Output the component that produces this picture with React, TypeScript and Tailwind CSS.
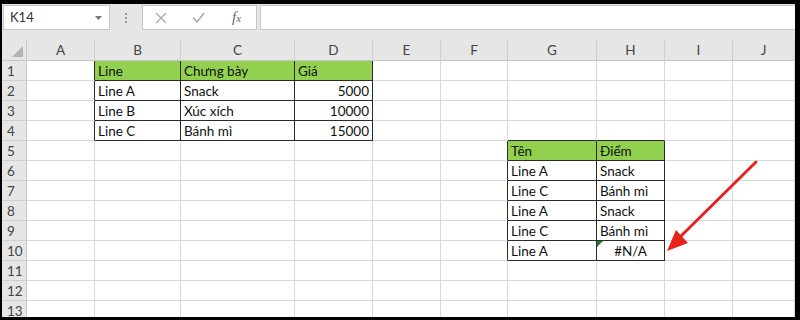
import React from "react";

type Cell = { text: string; align?: "left" | "right" | "center"; fill?: boolean; errorMark?: boolean };

const COLS = ["A", "B", "C", "D", "E", "F", "G", "H", "I", "J"];
const ROWS = [1, 2, 3, 4, 5, 6, 7, 8, 9, 10, 11, 12, 13];

// sheet content keyed by cell address
const CELLS: Record<string, Cell> = {
  B1: { text: "Line", fill: true },
  C1: { text: "Chưng bày", fill: true },
  D1: { text: "Giá", fill: true },
  B2: { text: "Line A" },
  C2: { text: "Snack" },
  D2: { text: "5000", align: "right" },
  B3: { text: "Line B" },
  C3: { text: "Xúc xích" },
  D3: { text: "10000", align: "right" },
  B4: { text: "Line C" },
  C4: { text: "Bánh mì" },
  D4: { text: "15000", align: "right" },
  G5: { text: "Tên", fill: true },
  H5: { text: "Điểm", fill: true },
  G6: { text: "Line A" },
  H6: { text: "Snack" },
  G7: { text: "Line C" },
  H7: { text: "Bánh mì" },
  G8: { text: "Line A" },
  H8: { text: "Snack" },
  G9: { text: "Line C" },
  H9: { text: "Bánh mì" },
  G10: { text: "Line A" },
  H10: { text: "#N/A", align: "center", errorMark: true },
};

// bordered ranges: [firstCol, lastCol, firstRow, lastRow]
const TABLES: Array<[number, number, number, number]> = [
  [1, 3, 1, 4],
  [6, 7, 5, 10],
];

function inTable(c: number, r: number) {
  return TABLES.some(([c0, c1, r0, r1]) => c >= c0 && c <= c1 && r >= r0 && r <= r1);
}

const FONT = { fontFamily: "Lato, 'Noto Sans', sans-serif" };

function FormulaBar() {
  return (
    <div className="h-[36px] bg-[#e6e6e6] flex items-start pt-[1px] pl-[1px]">
      <div className="w-[107px] h-[25px] bg-white border border-[#c6c6c6] flex items-center justify-between pl-[6px] pr-[7px] text-[13px] text-[#333]">
        <span>K14</span>
        <svg width="7" height="4" viewBox="0 0 7 4">
          <path d="M0 0h7L3.5 4z" fill="#777" />
        </svg>
      </div>
      <div className="w-[32px] h-[25px] flex flex-col items-center justify-center gap-[2px]">
        <span className="w-[2px] h-[2px] bg-[#999]" />
        <span className="w-[2px] h-[2px] bg-[#999]" />
        <span className="w-[2px] h-[2px] bg-[#999]" />
      </div>
      <div className="w-[115px] h-[25px] bg-white border border-[#c6c6c6] flex items-center">
        <div className="w-[36px] flex justify-center">
          <svg width="12" height="12" viewBox="0 0 12 12">
            <path d="M1 1l10 10M11 1L1 11" stroke="#a6a6a6" strokeWidth="1.2" />
          </svg>
        </div>
        <div className="w-[38px] flex justify-center">
          <svg width="13" height="11" viewBox="0 0 13 11">
            <path d="M1 5.5l4 4.5L12 1" stroke="#a6a6a6" strokeWidth="1.4" fill="none" />
          </svg>
        </div>
        <div className="flex-1 flex justify-center">
          <span className="italic text-[15px] text-[#666]" style={{ fontFamily: "'Liberation Serif', serif" }}>
            f<span className="text-[11px]">x</span>
          </span>
        </div>
      </div>
      <div className="ml-[3px] flex-1 h-[25px] bg-white border border-[#c6c6c6] border-r-0" />
    </div>
  );
}

export default function App() {
  return (
    <div className="w-[800px] h-[320px] bg-black pt-[4px] pl-[2px] pr-[5px] pb-[3px]" style={FONT}>
      <div className="relative w-full h-full overflow-hidden bg-white">
        <FormulaBar />

        <div className="grid grid-cols-[25px_68px_86px_114px_78px_68px_67px_89px_68px_68px_62px] grid-rows-[21px] auto-rows-[20px] text-[13.5px] text-[#111]">
          {/* column headers */}
          <div className="bg-[#e6e6e6] border-r border-b border-[#c6c6c6] relative">
            <svg className="absolute right-[3px] bottom-[3px]" width="11" height="11" viewBox="0 0 11 11">
              <path d="M11 0v11H0z" fill="#b4b4b4" />
            </svg>
          </div>
          {COLS.map((c) => (
            <div
              key={c}
              className="bg-[#e6e6e6] border-r border-b border-r-[#d0d0d0] border-b-[#c6c6c6] flex items-center justify-center text-[#444] pt-[1px]"
            >
              {c}
            </div>
          ))}

          {ROWS.map((r) => (
            <React.Fragment key={r}>
              <div className="bg-[#e6e6e6] border-r border-b border-r-[#c6c6c6] border-b-[#d0d0d0] flex items-center pl-[5px] pt-[1px] text-[#444]">
                {r}
              </div>
              {COLS.map((c, ci) => {
                const cell = CELLS[`${c}${r}`];
                const black = inTable(ci, r);
                const rightBlack = black || inTable(ci + 1, r);
                const bottomBlack = black || inTable(ci, r + 1);
                return (
                  <div
                    key={c}
                    className={`relative border-r border-b flex items-center px-[3px] pt-[1px] whitespace-nowrap overflow-hidden ${
                      rightBlack ? "border-r-[#2a2a2a]" : "border-r-[#d9d9d9]"
                    } ${bottomBlack ? "border-b-[#2a2a2a]" : "border-b-[#d9d9d9]"} ${cell?.fill ? "bg-[#92d050]" : ""} ${
                      cell?.align === "right" ? "justify-end" : cell?.align === "center" ? "justify-center" : "justify-start"
                    }`}
                  >
                    {cell?.errorMark && (
                      <svg className="absolute left-0 top-0" width="6" height="6" viewBox="0 0 6 6">
                        <path d="M0 0h6L0 6z" fill="#1e7b34" />
                      </svg>
                    )}
                    {cell?.text}
                  </div>
                );
              })}
            </React.Fragment>
          ))}
        </div>

        {/* red annotation arrow */}
        <svg className="absolute left-0 top-0 pointer-events-none" width="793" height="313" viewBox="2 4 793 313">
          <line x1="756" y1="162" x2="680" y2="237" stroke="#e8231c" strokeWidth="3" strokeLinecap="round" />
          <polygon points="667,251 688,243 676,230" fill="#e8231c" />
        </svg>
      </div>
    </div>
  );
}
